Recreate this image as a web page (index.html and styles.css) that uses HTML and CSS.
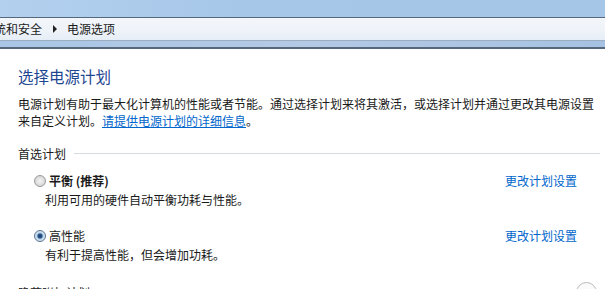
FILE: index.html
```html
<!DOCTYPE html>
<html lang="zh-CN">

<head>
    <meta charset="UTF-8">
    <meta name="viewport" content="width=device-width, initial-scale=1.0">
    <link rel="stylesheet" href="styles.css">
</head>

<body>

    <div class="window-top">
        <div class="glass"></div>
        <div class="crumbs">
            <span class="crumb first">系统和安全</span>
            <span class="crumb-arrow"></span>
            <span class="crumb">电源选项</span>
        </div>
        <div class="glass-bottom"></div>
    </div>

    <div class="content">
        <h1 class="title">选择电源计划</h1>
        <p class="intro">电源计划有助于最大化计算机的性能或者节能。通过选择计划来将其激活，或选择计划并通过更改其电源设置来自定义计划。<a href="#" class="link">请提供电源计划的详细信息</a>。</p>

        <div class="group-head">
            <span>首选计划</span>
            <span class="group-line"></span>
        </div>

        <div class="plan">
            <div class="plan-row">
                <label class="plan-name bold"><span class="radio"></span>平衡 (推荐)</label>
                <a href="#" class="plan-link">更改计划设置</a>
            </div>
            <p class="plan-desc">利用可用的硬件自动平衡功耗与性能。</p>
        </div>

        <div class="plan">
            <div class="plan-row">
                <label class="plan-name"><span class="radio checked"></span>高性能</label>
                <a href="#" class="plan-link">更改计划设置</a>
            </div>
            <p class="plan-desc">有利于提高性能，但会增加功耗。</p>
        </div>

        <div class="more-row">
            <span class="more-text">隐藏附加计划</span>
            <span class="more-btn"></span>
        </div>
    </div>

</body>

</html>
```

FILE: styles.css
```css
body {
    margin: 0;
    font-family: "Noto Sans CJK SC", "Noto Sans", sans-serif;
    font-size: 12px;
    color: #1a1a1a;
    background-color: #fff;
    overflow: hidden;
}

.window-top {
    display: flex;
    flex-direction: column;
}

.glass {
    height: 17px;
    background: linear-gradient(to right, #b3d0ee 0%, #a7c7e9 40%, #a6c6e8 100%);
    border-bottom: 1px solid #56697c;
}

.crumbs {
    height: 22px;
    display: flex;
    align-items: center;
    background: linear-gradient(to bottom, #f3f6fa 0%, #eef3f9 60%, #e5edf6 100%);
    border-bottom: 1px solid #9aaebf;
    overflow: hidden;
    white-space: nowrap;
}

.crumb {
    color: #1a1a1a;
    line-height: 22px;
}

.crumb.first {
    margin-left: -18px;
}

.crumb-arrow {
    width: 0;
    height: 0;
    border-top: 4px solid transparent;
    border-bottom: 4px solid transparent;
    border-left: 4px solid #222;
    margin: 0 10px 0 11px;
}

.glass-bottom {
    height: 6px;
    background: linear-gradient(to right, #a9c6e6 0%, #b4c9e4 50%, #a6c2e2 100%);
    border-bottom: 2px solid #56697c;
}

.content {
    padding: 16px 0 0 18px;
}

.title {
    margin: 0;
    font-size: 15.5px;
    font-weight: normal;
    color: #1e4691;
    line-height: 22px;
}

.intro {
    width: 580px;
    margin: 8px 0 0;
    line-height: 17px;
}

.link {
    color: #0066cc;
    text-decoration: underline;
}

.group-head {
    display: flex;
    align-items: center;
    margin-top: 16px;
    padding-right: 5px;
    line-height: 17px;
}

.group-line {
    flex: 1;
    height: 1px;
    background-color: #d5dbe0;
    margin-left: 8px;
}

.plan {
    margin-top: 10px;
    padding-left: 15px;
}

.plan + .plan {
    margin-top: 18px;
}

.plan-row {
    display: flex;
    justify-content: space-between;
    align-items: center;
    padding-right: 28px;
    line-height: 18px;
}

.plan-name {
    display: flex;
    align-items: center;
}

.plan-name.bold {
    font-weight: bold;
}

.radio {
    width: 12px;
    height: 12px;
    border-radius: 50%;
    border: 1px solid #9a9a9a;
    background: radial-gradient(circle at 50% 50%, #f4f4f4 0%, #dcdcdc 60%, #c8c8c8 100%);
    margin: 0 3px 0 1px;
    box-sizing: border-box;
}

.radio.checked {
    border-color: #5c7590;
    background: radial-gradient(circle at 50% 50%, #1f3d63 0%, #2c5b8f 30%, #bcd3ea 45%, #eef4fa 100%);
}

.plan-link {
    color: #0066cc;
    text-decoration: none;
}

.plan-desc {
    margin: 1px 0 0 12px;
    line-height: 18px;
}

.more-row {
    display: flex;
    justify-content: space-between;
    align-items: flex-start;
    margin-top: 20px;
    padding-right: 8px;
    line-height: 17px;
}

.more-btn {
    width: 19px;
    height: 19px;
    margin-top: -2px;
    border-radius: 50%;
    border: 1px solid #b9b9b9;
    background-color: #fafafa;
}
```
